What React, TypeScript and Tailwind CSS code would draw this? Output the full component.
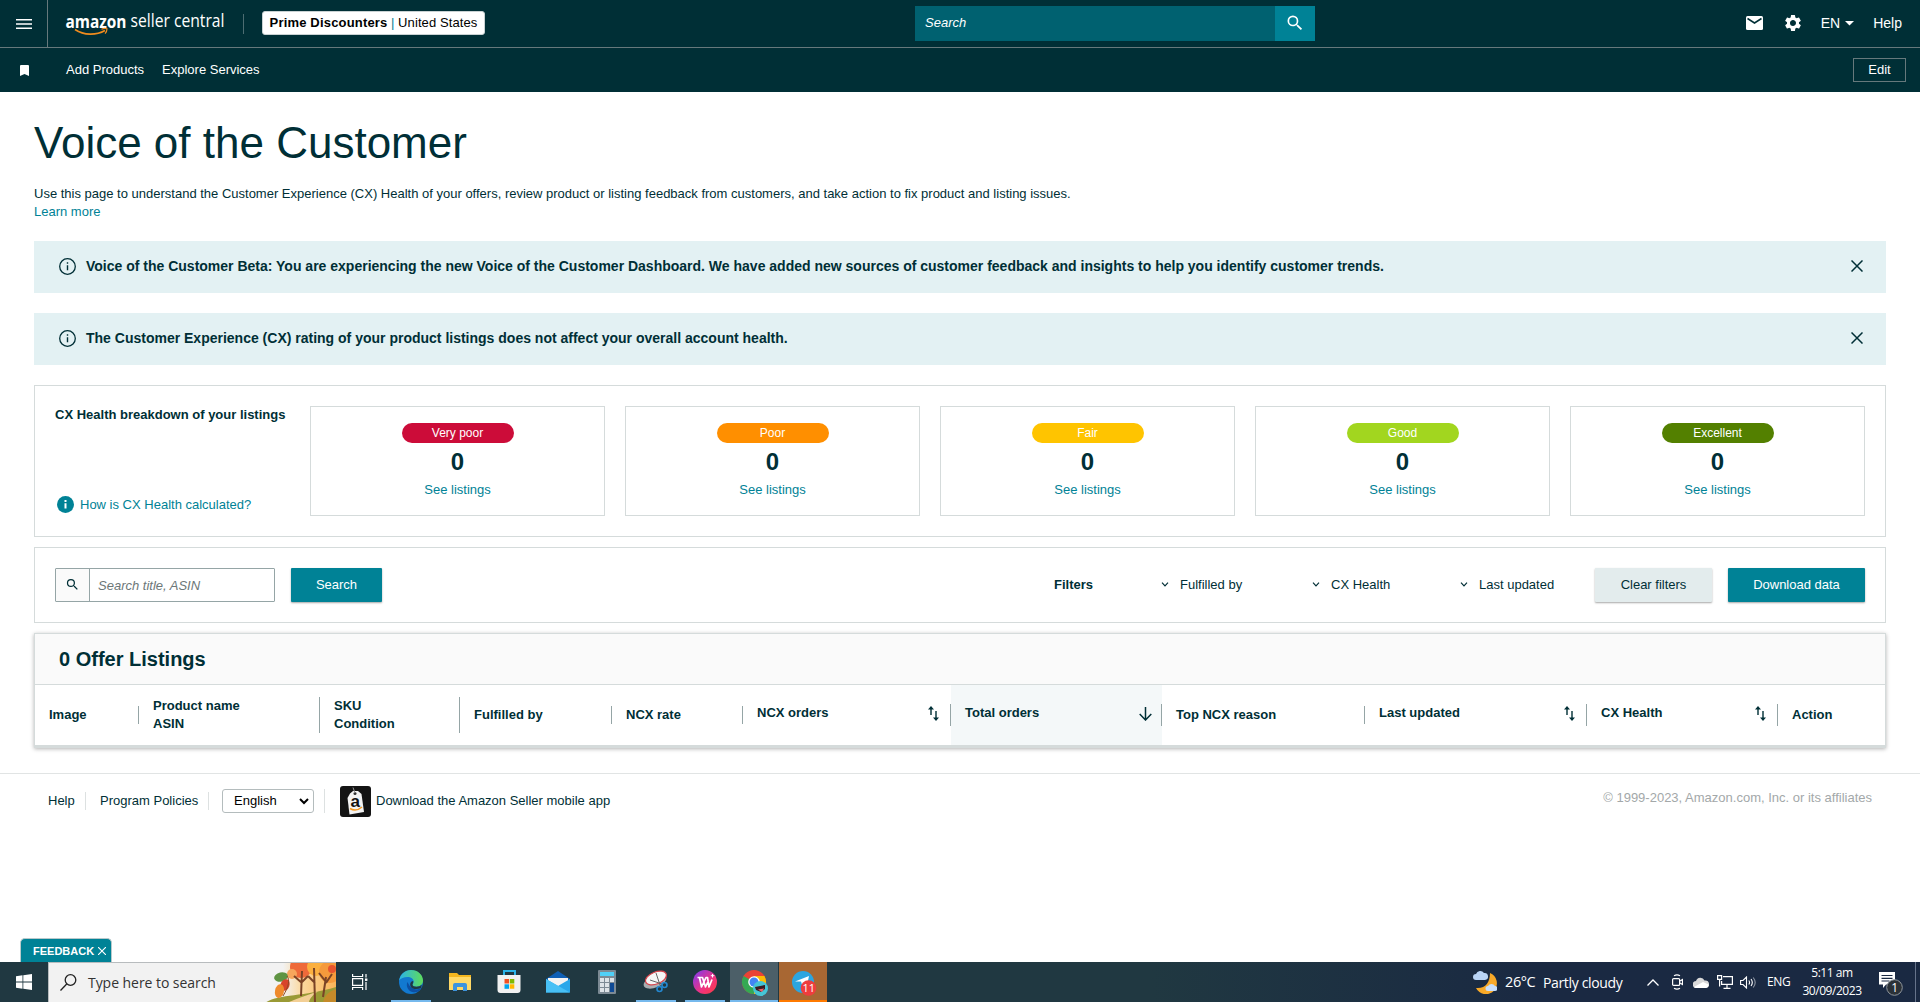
import type { ReactNode } from 'react';

interface Rating {
  label: string;
  color: string;
}

interface Column {
  lines: string[];
  width: string;
  sort?: 'both' | 'down';
  last?: boolean;
}

const ratings: Rating[] = [
  { label: 'Very poor', color: 'bg-[#cc0c39]' },
  { label: 'Poor', color: 'bg-[#ff8f00]' },
  { label: 'Fair', color: 'bg-[#ffc400]' },
  { label: 'Good', color: 'bg-[#a2d61f]' },
  { label: 'Excellent', color: 'bg-[#538000]' },
];

const columns: Column[] = [
  { lines: ['Image'], width: 'w-[104px]' },
  { lines: ['Product name', 'ASIN'], width: 'w-[181px]' },
  { lines: ['SKU', 'Condition'], width: 'w-[140px]' },
  { lines: ['Fulfilled by'], width: 'w-[152px]' },
  { lines: ['NCX rate'], width: 'w-[131px]' },
  { lines: ['NCX orders'], width: 'w-[208px]', sort: 'both' },
  { lines: ['Total orders'], width: 'w-[211px]', sort: 'down' },
  { lines: ['Top NCX reason'], width: 'w-[203px]' },
  { lines: ['Last updated'], width: 'w-[222px]', sort: 'both' },
  { lines: ['CX Health'], width: 'w-[191px]', sort: 'both' },
  { lines: ['Action'], width: 'w-[107px]', last: true },
];

function SearchIcon({ className }: { className: string }) {
  return (
    <svg className={className} viewBox="0 0 24 24" fill="currentColor">
      <path d="M15.5 14h-.79l-.28-.27A6.47 6.47 0 0016 9.5 6.5 6.5 0 109.5 16c1.61 0 3.09-.59 4.23-1.57l.27.28v.79l5 4.99L20.49 19l-4.99-5zm-6 0a4.5 4.5 0 110-9 4.5 4.5 0 010 9z" />
    </svg>
  );
}

function Logo() {
  return (
    <svg className="w-[185px] h-[38px]" viewBox="-4 -3.5 185 38">
      <text x="-.5" y="20" textLength="61" lengthAdjust="spacingAndGlyphs" fill="#fff" className="font-['Open_Sans',sans-serif] text-[17px] font-bold">amazon</text>
      <text x="64.5" y="19.5" textLength="94" lengthAdjust="spacingAndGlyphs" fill="#fff" className="font-['Open_Sans',sans-serif] text-[17.5px]">seller central</text>
      <path d="M9 22c9 6 21 6 30 1" fill="none" stroke="#f08c1e" strokeWidth="1.6" />
      <path d="M35.500 21.700c2-1 4-1 5.500-.5 0 2-.5 3.500-2 5" fill="none" stroke="#f08c1e" strokeWidth="1.200" />
    </svg>
  );
}

function Header() {
  return (
    <header className="bg-[#002f36] text-white h-[92px]">
      <div className="flex items-center h-12 border-b border-[#66797c]">
        <div className="w-12 h-[47px] flex items-center justify-center border-r border-[#66797c]">
          <svg className="w-4 h-[10px]" viewBox="0 0 16 10" fill="#fff">
            <path d="M0 0h16v1.500H0zM0 4.250h16v1.500H0zM0 8.500h16V10H0z" />
          </svg>
        </div>
        <div className="ml-[14px] -mt-[2px]"><Logo /></div>
        <div className="-ml-1 w-px h-5 bg-[#4d6d72]" />
        <div className="ml-[18px] -mt-[1px] h-6 w-[223px] rounded-[3px] bg-white border border-[#c9d2d3] flex items-center justify-center text-black whitespace-pre">
          <b className="tracking-[0.18px]">Prime Discounters</b>
          <span className="text-[#008296]"> | </span>
          <span className="tracking-[0.1px]">United States</span>
        </div>
        <div className="ml-[430px] -mt-[1px] flex h-[35px]">
          <div className="w-[360px] bg-[#006170] flex items-center pl-[10px] italic">Search</div>
          <div className="w-10 bg-[#008296] flex items-center justify-center">
            <SearchIcon className="w-5 h-5" />
          </div>
        </div>
        <div className="ml-auto mr-[18px] -mt-[1px] flex items-center">
          <svg className="w-[17px] h-[14px]" viewBox="0 0 17 14">
            <rect width="17" height="14" rx="1.500" fill="#fff" />
            <path d="M1.500 2.500l7 4.500 7-4.500" fill="none" stroke="#002f36" strokeWidth="1.500" />
          </svg>
          <svg className="w-5 h-5 ml-[20px]" viewBox="0 0 24 24" fill="#fff">
            <path d="M19.140 12.940c.04-.3.060-.61.060-.94 0-.32-.02-.64-.07-.94l2.030-1.580a.49.490 0 00.120-.61l-1.920-3.320a.488.488 0 00-.59-.22l-2.390.96c-.5-.38-1.030-.7-1.620-.94l-.36-2.540a.484.484 0 00-.48-.41h-3.840c-.24 0-.43.170-.47.410l-.36 2.540c-.59.240-1.130.570-1.620.94l-2.390-.96c-.22-.08-.47 0-.59.220L2.740 8.870c-.12.210-.08.470.120.610l2.030 1.580c-.05.3-.09.630-.09.940s.02.640.070.94l-2.030 1.580a.49.490 0 00-.12.610l1.920 3.320c.12.220.370.290.590.220l2.390-.96c.5.380 1.030.7 1.620.94l.36 2.540c.05.240.240.410.480.410h3.840c.24 0 .44-.17.470-.41l.36-2.540c.59-.24 1.130-.56 1.620-.94l2.390.96c.22.080.47 0 .59-.22l1.920-3.320c.12-.22.070-.47-.12-.61l-2.010-1.580zM12 15.600A3.610 3.610 0 018.400 12c0-1.980 1.620-3.600 3.600-3.600s3.600 1.620 3.600 3.600-1.620 3.600-3.600 3.600z" />
          </svg>
          <span className="ml-[18px] text-[14px]">EN</span>
          <svg className="w-[9px] h-[5px] ml-[5px]" viewBox="0 0 9 5" fill="#fff"><path d="M0 0h9L4.500 4.500z" /></svg>
          <span className="ml-[19px] text-[14px]">Help</span>
        </div>
      </div>
      <div className="flex items-center h-11">
        <div className="w-12 flex justify-center">
          <svg className="w-[9px] h-[11px]" viewBox="0 0 9 11" fill="#fff"><path d="M1 0h7a1 1 0 011 1v10L4.500 9 0 11V1a1 1 0 011-1z" /></svg>
        </div>
        <span className="ml-[18px]">Add Products</span>
        <span className="ml-[18px]">Explore Services</span>
        <div className="ml-auto mr-[14px] w-[53px] h-6 border border-[#66797c] flex items-center justify-center">Edit</div>
      </div>
    </header>
  );
}

function Banner({ children }: { children: ReactNode }) {
  return (
    <div className="mb-5 h-[52px] bg-[#e3f1f3] flex items-center pl-[25px] pr-[23px] pb-[2px] font-bold text-[14px]">
      <svg className="w-[17px] h-[17px] mr-[10px]" viewBox="0 0 17 17" fill="none" stroke="#002f36">
        <circle cx="8.500" cy="8.500" r="7.800" strokeWidth="1.300" />
        <path d="M8.500 7.300v5M8.500 4.300v1.500" strokeWidth="1.400" />
      </svg>
      <span className="leading-5 pb-px">{children}</span>
      <svg className="w-3 h-3 ml-auto" viewBox="0 0 12 12" fill="none" stroke="#002f36" strokeWidth="1.500">
        <path d="M.5.5l11 11M11.500.5l-11 11" />
      </svg>
    </div>
  );
}

function Breakdown() {
  return (
    <section className="h-[152px] border border-[#d5dbdb] flex pl-5 pt-5">
      <div className="w-[255px]">
        <div className="font-bold leading-[18px]">CX Health breakdown of your listings</div>
        <div className="mt-[71px] flex items-center pl-[2px] text-[#008296]">
          <svg className="w-[17px] h-[17px] mr-[6px]" viewBox="0 0 17 17">
            <circle cx="8.500" cy="8.500" r="8.500" fill="#008296" />
            <path d="M8.500 7.200v5.300M8.500 4v1.900" stroke="#fff" strokeWidth="2" />
          </svg>
          How is CX Health calculated?
        </div>
      </div>
      <div className="flex gap-5">
        {ratings.map((r) => (
          <div key={r.label} className="w-[295px] h-[110px] border border-[#d5dbdb] flex flex-col items-center pt-4">
            <div className={`w-[112px] h-5 rounded-full text-white text-center text-[12px] leading-[21px] ${r.color}`}>{r.label}</div>
            <div className="text-[24px] leading-[32px] font-bold mt-[3px]">0</div>
            <div className="text-[#008296] leading-[18px] mt-[3px]">See listings</div>
          </div>
        ))}
      </div>
    </section>
  );
}

function FilterItem({ label, className }: { label: string; className: string }) {
  return (
    <div className={`flex items-center ${className}`}>
      <svg className="w-[8px] h-[5px] mr-[11px]" viewBox="0 0 8 5" fill="none" stroke="#002f36" strokeWidth="1.200"><path d="M1 .700L4 3.800 7 .7" /></svg>
      {label}
    </div>
  );
}

function Toolbar() {
  return (
    <section className="mt-[10px] h-[76px] border border-[#d5dbdb] flex items-start px-5 pt-5">
      <div className="w-[220px] h-[34px] border border-[#95a5a6] flex rounded-[1px]">
        <div className="w-[34px] bg-[#fafafa] border-r border-[#95a5a6] flex items-center justify-center pb-[2px]">
          <SearchIcon className="w-[15px] h-[15px]" />
        </div>
        <div className="pl-2 pt-px flex items-center italic text-[#6c7778]">Search title, ASIN</div>
      </div>
      <div className="ml-4 w-[91px] h-[34px] bg-[#008296] rounded-[1px] shadow-[0_1px_2px_rgba(0,0,0,0.35)] text-white flex items-center justify-center pb-[1px]">Search</div>
      <div className="ml-auto flex items-center h-[33px]">
        <b className="w-[107px]">Filters</b>
        <FilterItem label="Fulfilled by" className="w-[151px]" />
        <FilterItem label="CX Health" className="w-[148px]" />
        <FilterItem label="Last updated" className="w-[135px]" />
      </div>
      <div className="w-[117px] h-[34px] bg-[#e3eced] rounded-[1px] shadow-[0_1px_2px_rgba(0,0,0,0.35)] flex items-center justify-center pb-[1px]">Clear filters</div>
      <div className="ml-4 w-[137px] h-[34px] bg-[#008296] rounded-[1px] shadow-[0_1px_2px_rgba(0,0,0,0.35)] text-white flex items-center justify-center pb-[1px]">Download data</div>
    </section>
  );
}

function SortIcon({ kind }: { kind: 'both' | 'down' }) {
  if (kind === 'down') {
    return (
      <svg className="w-[13px] h-[14px] mr-[9px] mb-[3px]" viewBox="0 0 13 14" fill="none" stroke="#002f36" strokeWidth="1.500">
        <path d="M6.500 0v13M.7 7l5.800 6 5.800-6" />
      </svg>
    );
  }
  return (
    <svg className="w-[11px] h-[15px] mr-[11px] mb-[3px]" viewBox="0 0 11 15" fill="#002f36">
      <path d="M3 0l3 3.500H3.700V9H2.300V3.500H0zM8 15l-3-3.500h2.300V5h1.400v6.500H11z" />
    </svg>
  );
}

function HeaderCell({ col }: { col: Column }) {
  const sepHeight = col.sort ? 'h-[22px]' : col.lines.length > 1 ? 'h-9' : 'h-[18px]';
  return (
    <div className={`${col.width} h-[60px] flex items-center pl-[14px] ${col.sort === 'down' ? 'bg-[#f4f8f9]' : ''}`}>
      <div className={`leading-[18px] font-bold mr-auto ${col.sort ? 'pb-1' : ''}`}>
        {col.lines.map((l) => <div key={l}>{l}</div>)}
      </div>
      {col.sort && <SortIcon kind={col.sort} />}
      {!col.last && <div className={`w-px bg-[#95a5a6] ${sepHeight}`} />}
    </div>
  );
}

function Listings() {
  return (
    <section className="mt-[10px] border border-b-[3px] border-[#d5dbdb] shadow-[0_1px_4px_rgba(0,0,0,0.3)]">
      <h2 className="h-[51px] pb-[1px] bg-[#fafafa] border-b border-[#d5dbdb] pl-6 flex items-center text-[20px] font-bold">0 Offer Listings</h2>
      <div className="flex">
        {columns.map((c) => <HeaderCell key={c.lines[0]} col={c} />)}
      </div>
    </section>
  );
}

function Footer() {
  return (
    <footer className="mt-[25px] border-t border-[#e1e4e4] h-[189px] px-12 flex items-start relative">
      <div className="flex items-center h-[30px] mt-3 w-full">
        <span className="w-[37px]">Help</span>
        <div className="w-px h-[18px] bg-[#dde1e1]" />
        <span className="w-[108px] ml-[14px] whitespace-nowrap">Program Policies</span>
        <div className="w-px h-[18px] bg-[#dde1e1]" />
        <div className="ml-[13px] w-[92px] h-6 rounded-[3px] border border-[#b4bcbd] flex items-center justify-between pl-[11px] pr-1 text-black">
          English
          <svg className="w-[10px] h-[7px]" viewBox="0 0 10 7" fill="none" stroke="#000" strokeWidth="2"><path d="M1 1l4 4 4-4" /></svg>
        </div>
        <div className="ml-[10px] w-px h-6 bg-[#dde1e1]" />
        <svg className="ml-[15px] w-[31px] h-[31px]" viewBox="0 0 31 31">
          <rect width="31" height="31" rx="3" fill="#141414" />
          <path d="M7.500 12L10 7.500l3-2.500h5l3.500 3 2.500 18-14.500 2.500z" fill="#f4f4f4" />
          <circle cx="15" cy="7.500" r="1.500" fill="#333" />
          <path d="M15 7L13 1.500" stroke="#999" />
          <text x="10.500" y="20.500" fontSize="17" fontWeight="bold" fill="#111">a</text>
          <path d="M10 22.500c4 2.500 8.500 1.500 12-1.500" fill="none" stroke="#f59a23" strokeWidth="1.500" />
        </svg>
        <span className="ml-[5px]">Download the Amazon Seller mobile app</span>
        <span className="ml-auto pb-[6px] text-[#a3a8a9]">© 1999-2023, Amazon.com, Inc. or its affiliates</span>
      </div>
      <div className="absolute bottom-0 left-[20px] w-[92px] h-6 rounded-t-[5px] bg-[#008296] border border-b-0 border-[#b9c9cb] text-white flex items-center pl-3">
        <b className="text-[11px] pt-px">FEEDBACK</b>
        <svg className="ml-[4px] w-[8px] h-[8px]" viewBox="0 0 7 7" stroke="#fff"><path d="M0 0l7 7M7 0L0 7" /></svg>
      </div>
    </footer>
  );
}

function AutumnArt() {
  return (
    <svg className="w-[71px] h-10" viewBox="0 0 71 40">
      <defs>
        <linearGradient id="sky" x1="0" y1="0" x2="1" y2="0"><stop offset="0" stopColor="#f2f2f2" /><stop offset=".35" stopColor="#fbd9a0" /><stop offset="1" stopColor="#f9b458" /></linearGradient>
      </defs>
      <path d="M18 0h53v40H18z" fill="url(#sky)" />
      <circle cx="36" cy="4" r="11" fill="#ee6a3a" />
      <circle cx="27" cy="11" r="5" fill="#f7a65c" />
      <circle cx="51" cy="4" r="9" fill="#fbb040" />
      <circle cx="65" cy="9" r="11" fill="#f59a3c" />
      <circle cx="67" cy="6" r="4" fill="#e8552f" />
      <path d="M0 40c12-9 38-6 71-16v16z" fill="#9a9a35" />
      <path d="M22 40c10-5 22-8 31-12-6 5-9 8-9 12z" fill="#f3cf95" />
      <path d="M71 26c-9 3-12 8-13 14h13z" fill="#c58a2a" />
      <path d="M37 8l-1 25M49 5l1 34M61 14l-3 20M29 13l8 7M43 13l-6 6M43 13l7 7M67 11l-6 9M54 10l7 9" stroke="#7a4326" strokeWidth="2" fill="none" />
      <ellipse cx="16" cy="14" rx="7" ry="4.500" fill="#5f9443" transform="rotate(-12 16 14)" />
      <ellipse cx="20" cy="22" rx="4.500" ry="6" fill="#d8442a" transform="rotate(20 20 22)" />
      <ellipse cx="14.500" cy="28" rx="4.500" ry="7" fill="#ef8a2c" transform="rotate(12 14 28)" />
      <path d="M22 13c3 4 2 10-4 20" stroke="#8a4a24" fill="none" />
    </svg>
  );
}

function Task({ children, state = '' }: { children?: ReactNode; state?: string }) {
  const bg = state === 'active' ? 'bg-[#4c5f68]' : state === 'alert' ? 'bg-[#a86733]' : '';
  const line =
    state === 'open' ? 'w-10 bg-[#76b9ed]' : state === 'active' ? 'w-12 bg-[#76b9ed]' : state === 'alert' ? 'w-12 bg-[#ff7a00]' : 'w-10';
  return (
    <div className={`w-12 h-10 flex flex-col items-center ${bg}`}>
      <svg className="w-6 h-6 mt-2 overflow-visible" viewBox="0 0 24 24">{children}</svg>
      <div className={`mt-auto h-[2px] ${line}`} />
    </div>
  );
}

function Taskbar() {
  return (
    <div className="h-10 bg-linear-to-r from-[#203841] from-60% to-[#1a2942] to-80% text-white flex items-center font-['Open_Sans','Noto_Sans',sans-serif]">
      <div className="w-12 flex justify-center">
        <svg className="w-4 h-4" viewBox="0 0 16 16" fill="#fff"><path d="M0 2.200l6.500-.9v6.300H0zM7.300 1.200L16 0v7.600H7.300zM0 8.400h6.500v6.300L0 13.800zM7.300 8.400H16V16l-8.700-1.200z" /></svg>
      </div>
      <div className="w-[288px] h-10 bg-[#f2f2f2] border-t border-l border-[#b8bcbe] flex items-center text-[#333]">
        <svg className="w-[17px] h-[17px] ml-[11px] mr-[11px]" viewBox="0 0 17 17" fill="none" stroke="#222" strokeWidth="1.300"><circle cx="10.500" cy="6" r="5.300" /><path d="M6.700 10L.5 16.500" /></svg>
        <span className="text-[14px] tracking-[-0.05px]">Type here to search</span>
        <div className="ml-auto"><AutumnArt /></div>
      </div>
      <div className="w-12 flex justify-center">
        <svg className="w-4 h-4" viewBox="0 0 16 16" fill="none" stroke="#fff" strokeWidth="1.200"><path d="M.6 0v2.500h10V0M.6 4.600h10v6.800H.6zM.6 16v-2.500h10V16M14 0v3.500M14 8v8" /><rect x="13" y="4.500" width="2.400" height="2.400" fill="#fff" stroke="none" /></svg>
      </div>
      <div className="ml-[3px] flex gap-px">
        <Task state="open">
          <defs>
            <linearGradient id="edgeTop" x1="0" y1="0" x2="1" y2="0"><stop offset="0" stopColor="#2bb3e8" /><stop offset="1" stopColor="#5fdc5a" /></linearGradient>
          </defs>
          <circle cx="12" cy="12" r="12" fill="#1279d0" />
          <path d="M.2 10.500C1 4.500 6 0 12 0c7 0 12 5 12 10.500 0 4-3 6.200-6.500 6.200-2.500 0-4-1-4-2 0-.8 1.200-1.200 1.200-3C14.700 9 12 7 8.500 7 5 7 1.500 8.500.2 10.500z" fill="url(#edgeTop)" />
          <path d="M8.500 12c-2 4 .5 9.500 6 10.300 3.500.4 6.500-1.500 8-4-3 1.500-6 1.500-8.500.2-3-1.500-4.500-4-5.500-6.500z" fill="#0c4fa3" />
          <path d="M13.500 14.700c0 1 1.500 2 4 2 2 0 4-.8 5.200-2l-.5 3.200c-6 2.500-11.500.5-11-4.200.3-1.500 1.500-2.500 3-2.700.3 2-.7 2.700-.7 3.700z" fill="#203841" />
        </Task>
        <Task>
          <path d="M1 3h8l2 2h12v15H1z" fill="#f3b61f" />
          <path d="M1 7h22v13H1z" fill="#ffd866" />
          <path d="M5 21v-6a2 2 0 012-2h10a2 2 0 012 2v6h-4v-4H9v4z" fill="#3d93dd" />
        </Task>
        <Task>
          <path d="M7 6V1h11v5" fill="none" stroke="#2bb3e8" strokeWidth="2" />
          <path d="M.5 5h23v15a3 3 0 01-3 3h-17a3 3 0 01-3-3z" fill="#f1f1f1" />
          <path d="M7.500 9H12v4.500H7.500z" fill="#f25022" /><path d="M12.800 9h4.500v4.500h-4.500z" fill="#7fba00" />
          <path d="M7.500 14.300H12v4.500H7.500z" fill="#00a4ef" /><path d="M12.800 14.300h4.500v4.500h-4.500z" fill="#ffb900" />
        </Task>
        <Task>
          <path d="M0 9l12-8 12 8v13H0z" fill="#0f5fb5" />
          <path d="M2 8h20v8H2z" fill="#f3f3f3" />
          <path d="M0 9l12 7 12-7v13.500H0z" fill="#2aa7ea" />
          <path d="M0 9l24 13.500H0z" fill="#48c0f5" />
        </Task>
        <Task>
          <rect x="3" width="18" height="24" rx="1" fill="#7c8a94" />
          <rect x="5" y="2" width="14" height="4" fill="#4fd0f7" />
          <path d="M5 8h4v4H5zM10 8h4v4h-4zM15 8h4v4h-4zM5 13h4v4H5zM10 13h4v4h-4zM5 18h4v4H5zM10 18h4v4h-4z" fill="#dde3e7" />
          <path d="M15 13h4v9h-4z" fill="#0f4a94" />
        </Task>
        <Task state="open">
          <ellipse cx="11" cy="11.500" rx="12" ry="6" fill="#a9adb0" transform="rotate(-22 11 11.500)" />
          <ellipse cx="12" cy="8" rx="11" ry="6" fill="#f5f5f5" stroke="#d8434a" strokeWidth="1.200" transform="rotate(-22 12 8)" />
          <path d="M12 3l4 12M6 10l12 4" stroke="#666" />
          <circle cx="15.500" cy="19" r="2.500" fill="none" stroke="#2387cf" strokeWidth="1.600" />
          <circle cx="20.500" cy="15" r="2.500" fill="none" stroke="#2387cf" strokeWidth="1.600" />
        </Task>
        <Task state="open">
          <defs>
            <linearGradient id="wps" x1="0" y1="0" x2="1" y2="1"><stop offset="0" stopColor="#7a3cf5" /><stop offset=".6" stopColor="#f0337f" /><stop offset="1" stopColor="#fb3d3d" /></linearGradient>
          </defs>
          <circle cx="12" cy="12" r="12" fill="url(#wps)" />
          <path d="M4.500 7.500H9.500l3 9.500 3-6.500M6.500 7.500l2 9.500 4.500-9.500h1.500l1.500 9.500L19 9.500" fill="none" stroke="#fff" strokeWidth="1.700" strokeLinejoin="round" />
          <path d="M19.500 4v3.500M17.800 5.700h3.500" stroke="#fff" />
        </Task>
        <Task state="active">
          <circle cx="12" cy="12" r="12" fill="#ea4335" />
          <path d="M12 12L1.600 6A12 12 0 0012 24z" fill="#34a853" />
          <path d="M12 6h10.400A12 12 0 0112 24z" fill="#fbbc05" />
          <circle cx="12" cy="12" r="5.800" fill="#fff" /><circle cx="12" cy="12" r="4.500" fill="#4285f4" />
          <circle cx="18.500" cy="18.500" r="7.500" fill="#45c5d6" />
          <path d="M13 17l10-2v4l-4 3-5-2z" fill="#3a1d24" /><path d="M16 19.500l6-1-2 3.500z" fill="#f0646a" />
        </Task>
        <Task state="alert">
          <circle cx="12" cy="12" r="11" fill="#2ca5e0" />
          <path d="M4 11.500L18 6l-2.500 12-4.500-3.500-1-3z" fill="#fff" />
          <circle cx="17.500" cy="18" r="7.800" fill="#ee3d3d" />
          <text x="11.500" y="22" fontSize="11" fill="#fff">11</text>
        </Task>
      </div>

      <div className="ml-auto flex items-center">
        <svg className="w-6 h-6" viewBox="0 0 24 24">
          <path d="M17 3a11 11 0 11-14 15c9 1 14-5 14-15z" fill="#f8a928" />
          <path d="M3 10a3 3 0 010-6 4.500 4.500 0 018-1 3.500 3.500 0 011 7z" fill="#b9d4f5" />
          <path d="M15 21a2.500 2.500 0 010-5 4 4 0 017 0 2.500 2.500 0 010 5z" fill="#c9dffa" />
        </svg>
        <span className="ml-2 w-[38px] text-[14.500px] tracking-[-0.4px]">26°C</span>
        <span className="w-[104px] text-[14px] tracking-[-0.35px] whitespace-nowrap">Partly cloudy</span>
        <svg className="w-3 h-[7px]" viewBox="0 0 12 7" fill="none" stroke="#fff" strokeWidth="1.300"><path d="M.5 6.500L6 1l5.500 5.500" /></svg>
        <svg className="ml-[13px] w-[11px] h-4" viewBox="0 0 11 16" fill="none" stroke="#fff" strokeWidth="1.200"><rect x=".6" y="4.600" width="7" height="6.800" rx="1" /><path d="M8 7l2.500-1.500v5L8 9M2 1.800Q5 0 8 1.800M2 14.200q3 1.800 6 0" /></svg>
        <svg className="ml-[10px] w-4 h-[11px]" viewBox="0 0 16 11"><path d="M3.500 11a3.500 3.500 0 01-.5-7 4.500 4.500 0 018.500-.5A3.800 3.800 0 0113 11z" fill="#d9d9d9" /><path d="M1 10l9-5 5.500 2.500A3 3 0 0113 11H3.500A3 3 0 011 10z" fill="#fff" /></svg>
        <svg className="ml-2 w-4 h-[14px]" viewBox="0 0 16 14" fill="none" stroke="#fff" strokeWidth="1.200"><path d="M6 1.600h9.400v7.800H4.600V6M10 9.400V13M6.500 13.400h7M.6.600h4v3.800h-4zM2.600 4.400v7" /></svg>
        <svg className="ml-[7px] w-[17px] h-[13px]" viewBox="0 0 17 13" fill="none" stroke="#fff" strokeWidth="1.100"><path d="M.6 4.500H3L6.500 1v11L3 8.500H.6zM8.800 4.500q1.500 2 0 4M11 3q2.600 3.500 0 7" /><path d="M13.200 1.500q4 5 0 10" opacity=".5" /></svg>
        <span className="ml-[10px] w-[23px] text-[12px] tracking-[-0.3px]">ENG</span>
        <div className="ml-3 w-[60px] text-center text-[12px] leading-[18px] tracking-[-0.45px] whitespace-nowrap">
          <div>5:11 am</div>
          <div>30/09/2023</div>
        </div>
        <svg className="ml-[17px] w-6 h-6 mt-[3px]" viewBox="0 0 24 24">
          <path d="M0 0h16v12.500H7L4 16v-3.500H0z" fill="#fff" />
          <path d="M2.500 3.500h11M2.500 6.300h11M2.500 9h8" stroke="#1a2942" strokeWidth="1.200" />
          <circle cx="15.500" cy="15.500" r="7.800" fill="#2b3137" stroke="#8f969c" />
          <text x="12.200" y="19.800" fontSize="12" fill="#fff">1</text>
        </svg>
        <div className="ml-3 mr-1 w-px h-10 bg-[#66738a]" />
      </div>
    </div>
  );
}

export default function App() {
  return (
    <div className="w-full h-[1002px] overflow-hidden bg-white text-[#002f36] text-[13px] font-['Liberation_Sans',Arial,sans-serif]">
      <Header />
      <main className="mx-[34px] pt-[23px]">
        <h1 className="text-[44px] leading-[55px]">Voice of the Customer</h1>
        <p className="mt-[15px] mb-[20px] leading-[18px]">
          Use this page to understand the Customer Experience (CX) Health of your offers, review product or listing feedback from customers, and take action to fix product and listing issues.
          <br />
          <a className="text-[#008296]">Learn more</a>
        </p>
        <Banner>Voice of the Customer Beta: You are experiencing the new Voice of the Customer Dashboard. We have added new sources of customer feedback and insights to help you identify customer trends.</Banner>
        <Banner>The Customer Experience (CX) rating of your product listings does not affect your overall account health.</Banner>
        <Breakdown />
        <Toolbar />
        <Listings />
      </main>
      <Footer />
      <Taskbar />
    </div>
  );
}
